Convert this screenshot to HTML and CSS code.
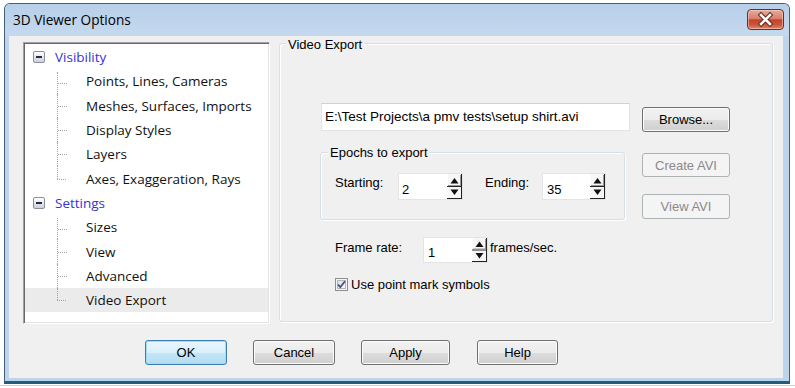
FILE: index.html
```html
<!DOCTYPE html>
<html>
<head>
<meta charset="utf-8">
<link rel="stylesheet" href="styles.css">
</head>
<body>
<div class="window">
  <div class="titlebar">
    <span class="title">3D Viewer Options</span>
    <div class="close">
      <svg width="35" height="19" viewBox="0 0 35 19">
        <path d="M13 5 L22 14 M22 5 L13 14" stroke="#6a2a1c" stroke-width="4.6" stroke-linecap="square" fill="none"/>
        <path d="M13 5 L22 14 M22 5 L13 14" stroke="#ffffff" stroke-width="2.6" stroke-linecap="square" fill="none"/>
      </svg>
    </div>
  </div>
  <div class="client">
    <div class="main">
      <div class="tree">
        <div class="node parent"><span class="toggle"></span><span class="plabel">Visibility</span></div>
        <div class="node child first"><span class="branch"></span><span class="clabel">Points, Lines, Cameras</span></div>
        <div class="node child"><span class="branch"></span><span class="clabel">Meshes, Surfaces, Imports</span></div>
        <div class="node child"><span class="branch"></span><span class="clabel">Display Styles</span></div>
        <div class="node child"><span class="branch"></span><span class="clabel">Layers</span></div>
        <div class="node child last"><span class="branch"></span><span class="clabel">Axes, Exaggeration, Rays</span></div>
        <div class="node parent"><span class="toggle"></span><span class="plabel">Settings</span></div>
        <div class="node child first"><span class="branch"></span><span class="clabel">Sizes</span></div>
        <div class="node child"><span class="branch"></span><span class="clabel">View</span></div>
        <div class="node child"><span class="branch"></span><span class="clabel">Advanced</span></div>
        <div class="node child last selected"><span class="branch"></span><span class="clabel">Video Export</span></div>
      </div>
      <div class="groupbox video">
        <div class="gb-title">Video Export</div>
        <div class="file-row">
          <div class="textbox file">E:\Test Projects\a pmv tests\setup shirt.avi</div>
          <div class="btn browse">Browse...</div>
        </div>
        <div class="lower">
          <div class="left-col">
            <div class="groupbox epochs">
              <div class="gb-title epochs-title">Epochs to export</div>
              <div class="epoch-row">
                <span class="lbl lbl-start">Starting:</span>
                <div class="spinbox sb-start"><span class="val">2</span>
                  <svg class="spin" width="15" height="25" viewBox="0 0 15 25">
                    <rect x="0" y="0" width="15" height="25" fill="#f6f6f6"/>
                    <path d="M0.5 0 V25" stroke="#ffffff" stroke-width="1"/>
                    <path d="M14.5 0 V25 M0 24.5 H15 M0 12.5 H15" stroke="#222" stroke-width="1"/>
                    <path d="M1 11.5 H14 M13.5 1 V12" stroke="#9a9a9a" stroke-width="1"/>
                    <path d="M3.5 9.5 L7.5 4 L11.5 9.5 Z" fill="#111"/>
                    <path d="M3.5 15.5 L7.5 21 L11.5 15.5 Z" fill="#111"/>
                  </svg>
                </div>
                <span class="lbl lbl-end">Ending:</span>
                <div class="spinbox sb-end"><span class="val">35</span>
                  <svg class="spin" width="15" height="25" viewBox="0 0 15 25">
                    <rect x="0" y="0" width="15" height="25" fill="#f6f6f6"/>
                    <path d="M0.5 0 V25" stroke="#ffffff" stroke-width="1"/>
                    <path d="M14.5 0 V25 M0 24.5 H15 M0 12.5 H15" stroke="#222" stroke-width="1"/>
                    <path d="M1 11.5 H14 M13.5 1 V12" stroke="#9a9a9a" stroke-width="1"/>
                    <path d="M3.5 9.5 L7.5 4 L11.5 9.5 Z" fill="#111"/>
                    <path d="M3.5 15.5 L7.5 21 L11.5 15.5 Z" fill="#111"/>
                  </svg>
                </div>
              </div>
            </div>
            <div class="rate-row">
              <span class="lbl lbl-rate">Frame rate:</span>
              <div class="spinbox sb-rate"><span class="val">1</span>
                <svg class="spin" width="15" height="24" viewBox="0 0 15 24">
                  <rect x="0" y="0" width="15" height="24" fill="#f6f6f6"/>
                  <path d="M0.5 0 V24" stroke="#ffffff" stroke-width="1"/>
                  <path d="M14.5 0 V24 M0 23.5 H15 M0 12 H15" stroke="#222" stroke-width="1"/>
                  <path d="M1 11 H14 M13.5 1 V11.5" stroke="#9a9a9a" stroke-width="1"/>
                  <path d="M3.5 9 L7.5 3.5 L11.5 9 Z" fill="#111"/>
                  <path d="M3.5 15 L7.5 20.5 L11.5 15 Z" fill="#111"/>
                </svg>
              </div>
              <span class="lbl lbl-fps">frames/sec.</span>
            </div>
            <div class="check-row">
              <svg class="checkbox" width="13" height="13" viewBox="0 0 13 13">
                <defs>
                  <linearGradient id="cbg" x1="0" y1="0" x2="1" y2="1">
                    <stop offset="0" stop-color="#dcdcdc"/>
                    <stop offset="1" stop-color="#fbfbfb"/>
                  </linearGradient>
                </defs>
                <rect x="0.5" y="0.5" width="12" height="12" fill="#f4f4f4" stroke="#8e8f8f"/>
                <rect x="2.5" y="2.5" width="8" height="8" fill="url(#cbg)" stroke="#b6b6b6"/>
                <path d="M3 6.5 L5.3 9.2 L10 3.2" stroke="#3c4f8e" stroke-width="1.8" fill="none"/>
              </svg>
              <span class="check-label">Use point mark symbols</span>
            </div>
          </div>
          <div class="right-col">
            <div class="btn disabled create">Create AVI</div>
            <div class="btn disabled view">View AVI</div>
          </div>
        </div>
      </div>
    </div>
    <div class="buttons">
      <div class="btn dlg default b-ok">OK</div>
      <div class="btn dlg b-cancel">Cancel</div>
      <div class="btn dlg b-apply">Apply</div>
      <div class="btn dlg b-help">Help</div>
    </div>
  </div>
</div>
<div class="shadow-line"></div>
</body>
</html>
```

FILE: styles.css
```css
* { box-sizing: border-box; }

html, body {
  margin: 0;
  padding: 0;
  background: #ffffff;
}

body {
  width: 795px;
  height: 388px;
  overflow: hidden;
  font-family: "Liberation Sans", Arial, sans-serif;
  font-size: 13px;
  color: #000;
}

.window {
  margin: 3px 0 0 4px;
  width: 786px;
  height: 381px;
  border: 1px solid #435f7b;
  border-bottom: 3px solid #1f5f7e;
  border-radius: 6px 6px 0 0;
  background: #bdd4ec;
  display: flex;
  flex-direction: column;
}

.titlebar {
  height: 32px;
  display: flex;
  align-items: flex-start;
  justify-content: space-between;
  background: linear-gradient(#b7cfe9, #c5d9ee);
  border-radius: 5px 5px 0 0;
}

.title {
  font-family: "Open Sans", "Noto Sans", sans-serif;
  font-size: 13.6px;
  line-height: 32px;
  padding-left: 8px;
  color: #000;
}

.close {
  margin: 5px 5px 0 0;
  width: 37px;
  height: 21px;
  border: 1px solid #6b2d1f;
  border-radius: 4px;
  background: linear-gradient(#e8aa9b 0%, #d9806b 45%, #c3432a 52%, #cc553b 78%, #e08a6e 100%);
  box-shadow: inset 0 0 0 1px rgba(255, 220, 210, 0.5);
  display: flex;
}

.client {
  margin: 0 6px 0 4px;
  height: 342px;
  background: #f0f0f0;
  display: flex;
  flex-direction: column;
}

.main {
  display: flex;
  align-items: flex-start;
  margin-top: 6px;
  padding-left: 14px;
}

/* tree */
.tree {
  width: 247px;
  height: 282px;
  background: #ffffff;
  border-top: 1px solid #a0a0a0;
  border-left: 1px solid #a0a0a0;
  border-right: 1px solid #ffffff;
  border-bottom: 1px solid #ffffff;
  box-shadow: inset 1px 1px 0 #696969, inset -1px -1px 0 #e3e3e3;
  padding-top: 2px;
  font-family: "Open Sans", "Noto Sans", sans-serif;
  font-size: 13.5px;
}

.node {
  height: 24.3px;
  display: flex;
  align-items: center;
  white-space: nowrap;
}

.parent { padding-left: 9px; }

.toggle {
  width: 12px;
  height: 12px;
  border: 1px solid #8b8f98;
  border-radius: 2px;
  background: linear-gradient(#ffffff, #c9d2de);
  display: flex;
  align-items: center;
  justify-content: center;
}

.toggle::after {
  content: "";
  width: 6px;
  height: 2px;
  background: #2b2b35;
}

.plabel {
  margin-left: 10px;
  color: #3434d6;
}

.child {
  padding-left: 33px;
  align-items: stretch;
}

.branch {
  width: 9px;
  position: relative;
  border-left: 1px dotted #a2a2a2;
}

.child.first .branch { margin-top: 3px; }

.child.last .branch {
  border-left: none;
}

.child.last .branch::before {
  content: "";
  position: absolute;
  left: 0;
  top: 0;
  height: 50%;
  border-left: 1px dotted #a2a2a2;
}

.branch::after {
  content: "";
  position: absolute;
  left: 0;
  top: 50%;
  width: 9px;
  border-top: 1px dotted #a2a2a2;
}

.clabel {
  margin-left: 20px;
  display: flex;
  align-items: center;
  color: #111;
}

.selected {
  background: #ebebeb;
  margin: 0 1px;
  padding-left: 32px;
}

/* group boxes */
.groupbox {
  border: 1px solid #d5dfe5;
  border-radius: 3px;
  box-shadow: inset 1px 1px 0 #ffffff, 1px 1px 0 #ffffff;
}

.video {
  margin-left: 9px;
  margin-top: 1px;
  width: 494px;
  height: 279px;
}

.gb-title {
  margin: -7px 0 0 6px;
  padding: 0 2px;
  width: max-content;
  line-height: 16px;
  background: #f0f0f0;
}

.epochs-title {
  margin: -8px 0 0 7px;
}

.file-row {
  display: flex;
  align-items: flex-start;
  margin-top: 50px;
  padding-left: 41px;
}

.textbox {
  background: #ffffff;
  border: 1px solid #e2e3e8;
  border-top-color: #cfd1d8;
}

.file {
  width: 309px;
  height: 28px;
  line-height: 26px;
  padding-left: 3px;
  font-size: 13.5px;
  white-space: nowrap;
}

.btn {
  display: flex;
  align-items: center;
  justify-content: center;
  border: 1px solid #707070;
  border-radius: 3px;
  background: linear-gradient(#f2f2f2 0%, #ebebeb 50%, #dddddd 51%, #cfcfcf 100%);
  box-shadow: inset 0 0 0 1px #fbfbfb;
  white-space: nowrap;
}

.browse {
  margin-left: 12px;
  margin-top: 4px;
  width: 88px;
  height: 25px;
}

.disabled {
  border-color: #adb2b5;
  background: #f4f4f4;
  color: #8a8a8a;
  box-shadow: none;
}

.lower {
  display: flex;
  margin-top: 20px;
  padding-left: 40px;
}

.left-col {
  width: 305px;
  display: flex;
  flex-direction: column;
}

.epochs {
  height: 68px;
}

.epoch-row {
  display: flex;
  align-items: flex-start;
  margin-top: 12px;
  padding-left: 14px;
}

.lbl {
  line-height: 20px;
  white-space: nowrap;
}

.lbl-start { width: 63px; }
.lbl-end { width: 57px; margin-left: 22px; }

.spinbox {
  display: flex;
  align-items: flex-start;
  height: 27px;
  background: #ffffff;
  border: 1px solid #e4e4e8;
}

.sb-start { width: 65px; }
.sb-end { width: 64px; }

.val {
  padding-left: 3px;
  padding-top: 8px;
  line-height: 16px;
  flex: 1;
}

.sb-end .val { padding-left: 4px; }

.spin { display: block; flex: none; }

.rate-row {
  display: flex;
  align-items: flex-start;
  margin-top: 17px;
  padding-left: 15px;
}

.lbl-rate { width: 88px; line-height: 22px; }

.sb-rate {
  width: 65px;
  height: 26px;
}

.sb-rate .val { padding-left: 4px; padding-top: 7px; }

.lbl-fps { margin-left: 2px; line-height: 22px; }

.check-row {
  display: flex;
  align-items: flex-start;
  margin-top: 14px;
  padding-left: 15px;
}

.checkbox { display: block; flex: none; margin-top: 1px; }

.check-label {
  margin-left: 3px;
  line-height: 16px;
}

.right-col {
  margin-left: 17px;
  display: flex;
  flex-direction: column;
}

.create {
  margin-top: 1px;
  width: 88px;
  height: 24px;
}

.view {
  margin-top: 17px;
  width: 88px;
  height: 25px;
}

/* dialog buttons */
.buttons {
  display: flex;
  margin-top: 16px;
  padding-left: 136px;
}

.dlg { height: 25px; }

.default {
  border-color: #3c7fb1;
  background: linear-gradient(#eaf6fd 0%, #d9f0fc 50%, #c4e6f8 51%, #b4dcf2 100%);
  box-shadow: inset 0 0 0 1px #9fdcf7;
}

.b-ok { width: 82px; }
.b-cancel { width: 82px; margin-left: 26px; }
.b-apply { width: 89px; margin-left: 26px; }
.b-help { width: 81px; margin-left: 27px; }

.shadow-line {
  margin-top: 1px;
  height: 1px;
  background: #cfcfcf;
}
```
